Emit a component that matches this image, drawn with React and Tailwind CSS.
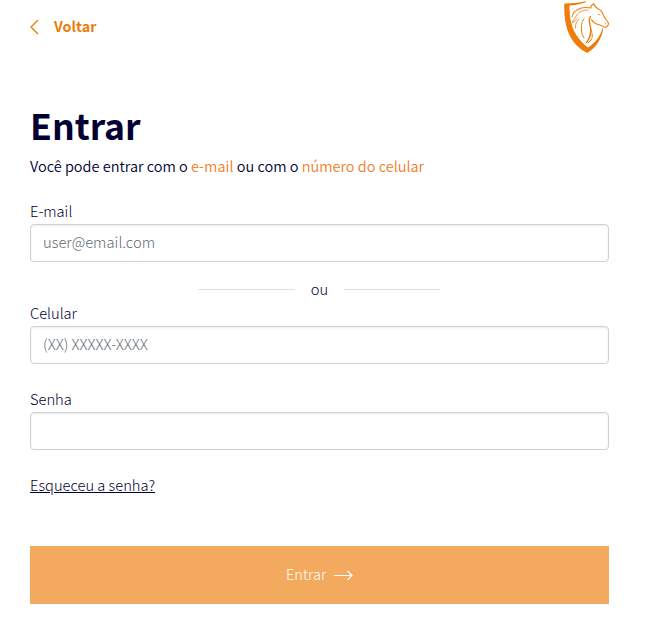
function Logo() {
  return (
    <svg width="46" height="52" viewBox="0 0 46 52" fill="none" className="mr-[-1px]">
      <path
        fill="#ee7d0b"
        d="M0.3 2.5C8 2.5 15 1.5 22 0.2L21.5 1.4C16 3 11 4 5.5 4.5C5.5 20 8 34 24 46.5C31 42 36 36 38.3 27.5L39.2 27.2C38 37 33 46 23.2 52C7 44 -0.5 28 0.3 2.5Z"
      />
      <g stroke="#ee7d0b" strokeLinecap="round" strokeLinejoin="round">
        <path strokeWidth="1.1" d="M8 16C8.5 13 11 9.5 16 7.5C20 6 24 6.5 27 7C26 5.5 28 3.5 30 2.8C30 4.5 31.5 6 33.5 7.5C37 9 38.5 11 39.5 14.5C40.5 17.5 43.5 19.5 44.5 22.5C44.5 24 43 25.8 41 26.2C39.5 26.5 38.5 24.5 36.5 24.2C33 23.5 29.5 22.5 27.5 18.5" />
        <path strokeWidth="0.8" d="M24 9C18 9 13.5 11.5 12 15.5C10.5 18 8.5 19 8.5 22C10.5 20.5 12 19 13 17.5M15 18C13 20 11 23 11.5 27M34 13.2L36 14M41.2 22.3L42 22.8" />
        <path strokeWidth="1.4" d="M26.5 15.5C24 18.5 25.5 22 26.5 26C27.2 31 26 37 22.5 41.5" />
        <path strokeWidth="1" d="M20 18C17 21 17.5 25 17.5 29C17.5 32 18.5 34.5 20 37M27.5 29C27.5 33 29.5 35 27 39L24 42" />
      </g>
    </svg>
  );
}

function Field({ label, placeholder, type = "text", className = "" }) {
  return (
    <label className={`block ${className}`}>
      <span className="block h-[25px] leading-6">{label}</span>
      <input
        type={type}
        placeholder={placeholder}
        className="block h-[38px] w-full rounded-[4px] border border-[#ced0da] bg-white px-3 pb-[3px] text-[14.8px] shadow-[inset_0_1px_2px_rgba(0,0,0,0.075)] placeholder:text-[#626b73] placeholder:opacity-100"
      />
    </label>
  );
}

export default function App() {
  return (
    <main className="h-[626px] w-full overflow-hidden bg-white pl-[30px] pr-9 font-['Noto_Sans_CJK_JP',sans-serif] text-[14.7px] font-light text-[#000033]">
      <header className="flex h-[54px] items-start justify-between">
        <a href="#" className="flex h-[54px] items-center text-[14.3px] font-bold text-[#ee7d0b]">
          <svg width="9" height="16" viewBox="0 0 9 16" fill="none" stroke="currentColor" strokeWidth="1.4" className="mr-[15px]">
            <path d="M8 1L1 8L8 15" />
          </svg>
          <span className="pb-0.5">Voltar</span>
        </a>
        <div className="pt-px"><Logo /></div>
      </header>
      <h1 className="mt-[47px] h-[48px] text-[35.6px] font-bold leading-[48px]">Entrar</h1>
      <p className="mt-[5px] h-6 whitespace-nowrap text-[14.5px] font-[350] leading-6">
        Você pode entrar com o <span className="text-[#f0812a]">e-mail</span> ou com o{" "}
        <span className="text-[#f0812a]">número do celular</span>
      </p>
      <form>
        <Field label="E-mail" placeholder="user@email.com" className="mt-[21px] pb-px" />
        <div className="ml-[168px] mt-[14px] flex h-6 w-[242px] items-center justify-between leading-6">
          <span className="h-px w-[97px] bg-[#dfdfe5]" />
          ou
          <span className="h-px w-24 bg-[#dfdfe5]" />
        </div>
        <Field label="Celular" placeholder="(XX) XXXXX-XXXX" />
        <Field label="Senha" type="password" className="mt-[23px]" />
        <a href="#" className="mt-[23px] block h-6 w-fit leading-6 underline">Esqueceu a senha?</a>
        <button type="button" className="mt-[49px] flex h-[58px] w-full items-center justify-center bg-[#f4aa5e] text-[14.6px] text-white">
          <span className="pb-0.5">Entrar</span>
          <svg width="19" height="10" viewBox="0 0 19 10" fill="none" stroke="currentColor" strokeWidth="1.1" className="ml-2">
            <path d="M0 5.5H18M13.5 1L18 5.5L13.5 10" />
          </svg>
        </button>
      </form>
    </main>
  );
}
